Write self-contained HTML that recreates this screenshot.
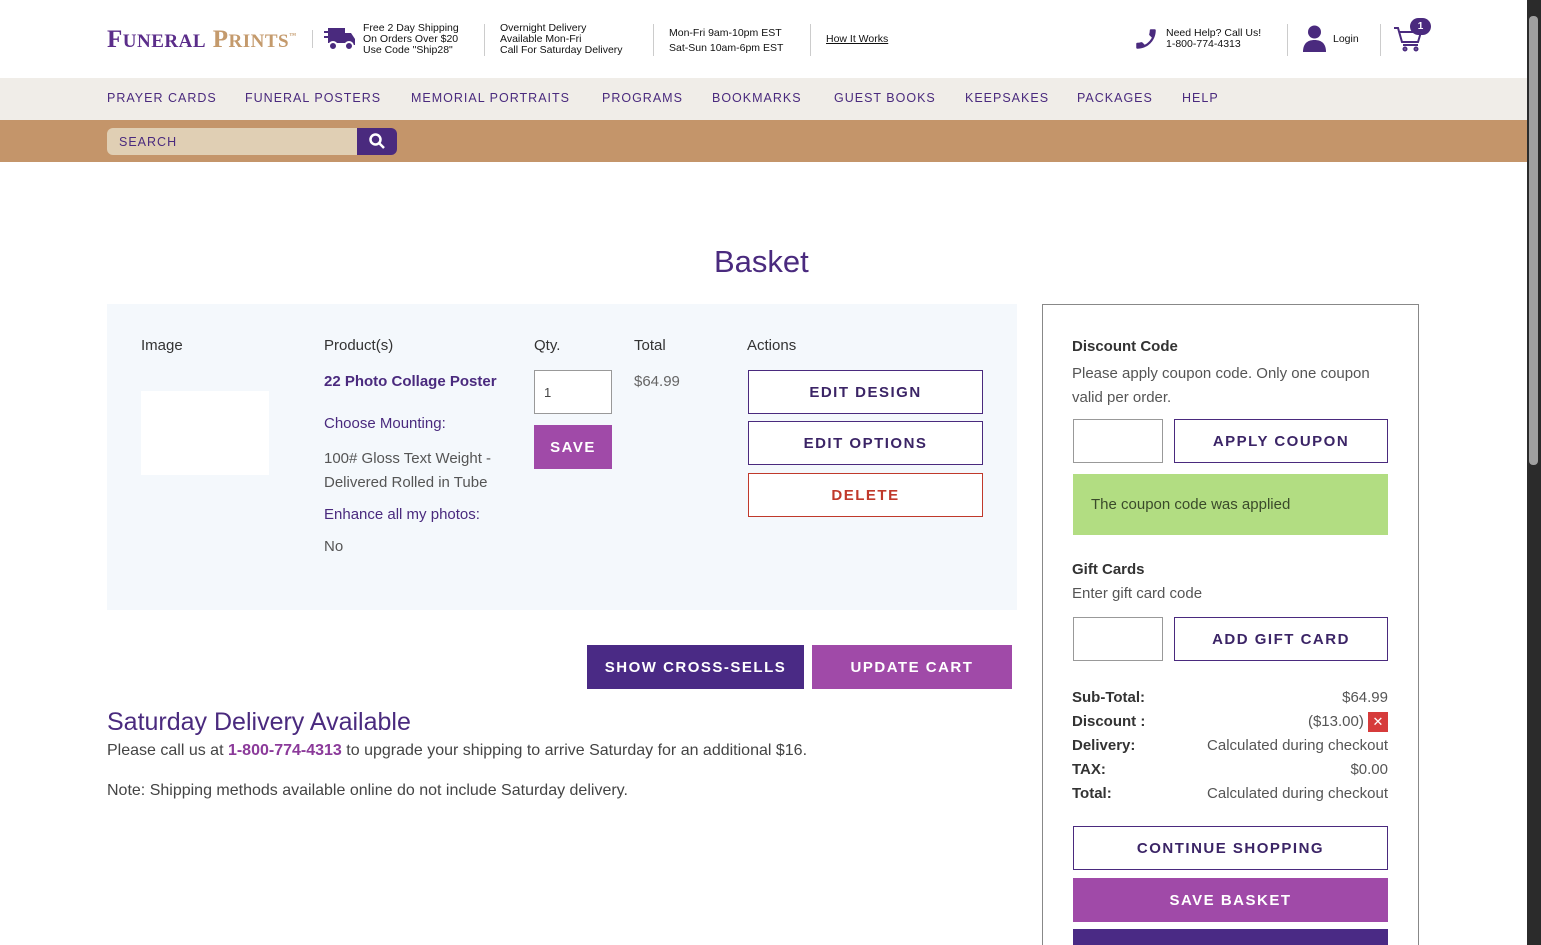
<!DOCTYPE html>
<html style="overflow:hidden"><head><meta charset="utf-8"><style>
*{box-sizing:border-box;margin:0;padding:0}
html,body{width:1541px;height:945px;overflow:hidden}
body{background:#fff;font-family:"Liberation Sans",sans-serif;color:#444;position:relative}
.a{position:absolute}
.btn{position:absolute;display:flex;align-items:center;justify-content:center;font-size:15px;letter-spacing:1.5px;font-weight:600}
.ob{border:1px solid #4a2a7e;color:#3b2466;background:#fff}
.t{font-size:15px;color:#555}
.small{font-size:10.5px;line-height:11px;color:#111}
.sep{position:absolute;width:1px;background:#ccc;top:24px;height:32px}
.nav span{position:absolute;top:91px;font-size:12.5px;letter-spacing:1px;color:#4a2a7e}
.lbl{font-weight:bold;color:#333}
</style></head><body>
<div class="a" style="left:107px;top:26px;font-family:'Liberation Serif',serif;font-size:25px;font-weight:bold;letter-spacing:.5px"><span style="color:#5b2d8a">F<span style="font-size:19px">UNERAL</span></span> <span style="color:#c49a6c">P<span style="font-size:19px">RINTS</span></span><sup style="font-size:7px;color:#c49a6c">™</sup></div>
<div class="sep" style="left:312px;top:30px;height:18px"></div>
<svg class="a" style="left:324px;top:25px" width="32" height="28" viewBox="0 0 32 28"><rect x="4" y="3" width="17" height="15" fill="#4a2a7e"/><path d="M21 8h6l4 6v6H21z" fill="#4a2a7e"/><rect x="0" y="6" width="8" height="2" fill="#4a2a7e"/><rect x="0" y="11" width="8" height="2" fill="#4a2a7e"/><circle cx="9" cy="21" r="4" fill="#4a2a7e" stroke="#fff" stroke-width="2"/><circle cx="25" cy="21" r="4" fill="#4a2a7e" stroke="#fff" stroke-width="2"/></svg>
<div class="a small" style="left:363px;top:23px">Free 2 Day Shipping<br>On Orders Over $20<br>Use Code "Ship28"</div>
<div class="sep" style="left:484px"></div>
<div class="a small" style="left:500px;top:23px">Overnight Delivery<br>Available Mon-Fri<br>Call For Saturday Delivery</div>
<div class="sep" style="left:653px"></div>
<div class="a small" style="left:669px;top:26px;line-height:15px">Mon-Fri 9am-10pm EST<br>Sat-Sun 10am-6pm EST</div>
<div class="sep" style="left:810px"></div>
<div class="a small" style="left:826px;top:34px;text-decoration:underline">How It Works</div>
<svg class="a" style="left:1133px;top:26px" width="26" height="26" viewBox="0 0 24 24"><path d="M20 15.5c-1.2 0-2.4-.2-3.6-.6-.3-.1-.7 0-1 .2l-2.2 2.2c-2.8-1.4-5.1-3.8-6.6-6.6l2.2-2.2c.3-.3.4-.7.2-1-.3-1.1-.5-2.3-.5-3.5 0-.6-.4-1-1-1H4c-.6 0-1 .4-1 1 0 9.4 7.6 17 17 17 .6 0 1-.4 1-1v-3.5c0-.6-.4-1-1-1z" fill="#4a2a7e" transform="scale(-1,1) translate(-24,0)"/></svg>
<div class="a small" style="left:1166px;top:28px">Need Help? Call Us!<br>1-800-774-4313</div>
<div class="sep" style="left:1287px"></div>
<svg class="a" style="left:1303px;top:25px" width="23" height="27" viewBox="0 0 23 27"><circle cx="11.5" cy="7" r="6.5" fill="#4a2a7e"/><path d="M0 27c0-8 4-12 11.5-12S23 19 23 27z" fill="#4a2a7e"/></svg>
<div class="a small" style="left:1333px;top:34px">Login</div>
<div class="sep" style="left:1380px"></div>
<svg class="a" style="left:1393px;top:24px" width="30" height="28" viewBox="0 0 30 28" fill="none" stroke="#4a2a7e" stroke-width="2"><path d="M1 4h4l4 14h16l3-10H7"/><path d="M10 21h15"/><circle cx="12" cy="25" r="1.5"/><circle cx="23" cy="25" r="1.5"/></svg>
<div class="a" style="left:1410px;top:18px;width:21px;height:17px;border-radius:9px;background:#4a2a7e;color:#fff;font-size:10px;font-weight:bold;text-align:center;line-height:17px">1</div>
<div class="a" style="left:0;top:78px;width:1527px;height:42px;background:#f0ede8"></div>
<div class="nav"><span style="left:107px">PRAYER CARDS</span><span style="left:245px">FUNERAL POSTERS</span><span style="left:411px">MEMORIAL PORTRAITS</span><span style="left:602px">PROGRAMS</span><span style="left:712px">BOOKMARKS</span><span style="left:834px">GUEST BOOKS</span><span style="left:965px">KEEPSAKES</span><span style="left:1077px">PACKAGES</span><span style="left:1182px">HELP</span></div>
<div class="a" style="left:0;top:120px;width:1527px;height:42px;background:#c4956a"></div>
<div class="a" style="left:107px;top:128px;width:252px;height:27px;background:#e0cfb4;border-radius:6px 0 0 6px;font-size:12.5px;letter-spacing:1px;color:#4a2a7e;padding:7px 12px">SEARCH</div>
<div class="a" style="left:357px;top:128px;width:40px;height:27px;background:#4a2a7e;border-radius:0 6px 6px 0"></div>
<svg class="a" style="left:368px;top:132px" width="18" height="18" viewBox="0 0 18 18" fill="none" stroke="#fff" stroke-width="2.5"><circle cx="7.5" cy="7.5" r="5"/><path d="M11 11l5 5"/></svg>
<div class="a" style="left:1527px;top:0;width:14px;height:945px;background:#2b2b2b"></div>
<div class="a" style="left:1529px;top:16px;width:9px;height:449px;background:#a0a0a0;border-radius:4px"></div>
<div class="a" style="left:714px;top:244px;font-size:31px;color:#4a2a7e">Basket</div>
<div class="a" style="left:107px;top:304px;width:910px;height:306px;background:#f4f8fc"></div>
<div class="a t" style="left:141px;top:337px;color:#333">Image</div>
<div class="a t" style="left:324px;top:337px;color:#333">Product(s)</div>
<div class="a t" style="left:534px;top:337px;color:#333">Qty.</div>
<div class="a t" style="left:634px;top:337px;color:#333">Total</div>
<div class="a t" style="left:747px;top:337px;color:#333">Actions</div>
<div class="a" style="left:141px;top:391px;width:128px;height:84px;background:#fff"></div>
<div class="a t" style="left:324px;top:373px;color:#4a2a7e;font-weight:600">22 Photo Collage Poster</div>
<div class="a t" style="left:324px;top:415px;color:#4a2a7e">Choose Mounting:</div>
<div class="a t" style="left:324px;top:447px;line-height:24px">100# Gloss Text Weight -<br>Delivered Rolled in Tube</div>
<div class="a t" style="left:324px;top:506px;color:#4a2a7e">Enhance all my photos:</div>
<div class="a t" style="left:324px;top:538px">No</div>
<div class="a" style="left:534px;top:370px;width:78px;height:44px;border:1px solid #999;background:#fff;font-size:13px;padding:14px 9px">1</div>
<div class="btn" style="left:534px;top:425px;width:78px;height:44px;background:#a04aa8;color:#fff">SAVE</div>
<div class="a t" style="left:634px;top:373px;color:#666">$64.99</div>
<div class="btn ob" style="left:748px;top:370px;width:235px;height:44px">EDIT DESIGN</div>
<div class="btn ob" style="left:748px;top:421px;width:235px;height:44px">EDIT OPTIONS</div>
<div class="btn" style="left:748px;top:473px;width:235px;height:44px;border:1px solid #c0392b;color:#c0392b;background:#fff">DELETE</div>
<div class="btn" style="left:587px;top:645px;width:217px;height:44px;background:#4a2a85;color:#fff">SHOW CROSS-SELLS</div>
<div class="btn" style="left:812px;top:645px;width:200px;height:44px;background:#a04aa8;color:#fff">UPDATE CART</div>
<div class="a" style="left:107px;top:708px;font-size:25px;color:#4a2a7e">Saturday Delivery Available</div>
<div class="a" style="left:107px;top:742px;font-size:16px;color:#444">Please call us at <b style="color:#8b3a9a">1-800-774-4313</b> to upgrade your shipping to arrive Saturday for an additional $16.</div>
<div class="a" style="left:107px;top:782px;font-size:16px;color:#444">Note: Shipping methods available online do not include Saturday delivery.</div>
<div class="a" style="left:1042px;top:304px;width:377px;height:641px;border:1px solid #888;border-bottom:none"></div>
<div class="a t lbl" style="left:1072px;top:338px">Discount Code</div>
<div class="a t" style="left:1072px;top:362px;line-height:24px">Please apply coupon code. Only one coupon<br>valid per order.</div>
<div class="a" style="left:1073px;top:419px;width:90px;height:44px;border:1px solid #999"></div>
<div class="btn ob" style="left:1174px;top:419px;width:214px;height:44px">APPLY COUPON</div>
<div class="a t" style="left:1073px;top:474px;width:315px;height:61px;background:#b2dd82;padding:22px 18px;color:#3a4a2a">The coupon code was applied</div>
<div class="a t lbl" style="left:1072px;top:561px">Gift Cards</div>
<div class="a t" style="left:1072px;top:585px">Enter gift card code</div>
<div class="a" style="left:1073px;top:617px;width:90px;height:44px;border:1px solid #999"></div>
<div class="btn ob" style="left:1174px;top:617px;width:214px;height:44px">ADD GIFT CARD</div>
<div class="a t lbl" style="left:1072px;top:686px;line-height:24px">Sub-Total:<br>Discount :<br>Delivery:<br>TAX:<br>Total:</div>
<div class="a t" style="left:1150px;top:686px;width:238px;text-align:right;line-height:24px;color:#555">$64.99<br>($13.00) <span style="display:inline-block;width:20px;height:20px;background:#d63b3b;color:#fff;text-align:center;line-height:20px;font-size:13px;vertical-align:middle">✕</span><br>Calculated during checkout<br>$0.00<br>Calculated during checkout</div>
<div class="btn ob" style="left:1073px;top:826px;width:315px;height:44px">CONTINUE SHOPPING</div>
<div class="btn" style="left:1073px;top:878px;width:315px;height:44px;background:#a04aa8;color:#fff">SAVE BASKET</div>
<div class="a" style="left:1073px;top:929px;width:315px;height:16px;background:#4a2a85"></div>
</body></html>
